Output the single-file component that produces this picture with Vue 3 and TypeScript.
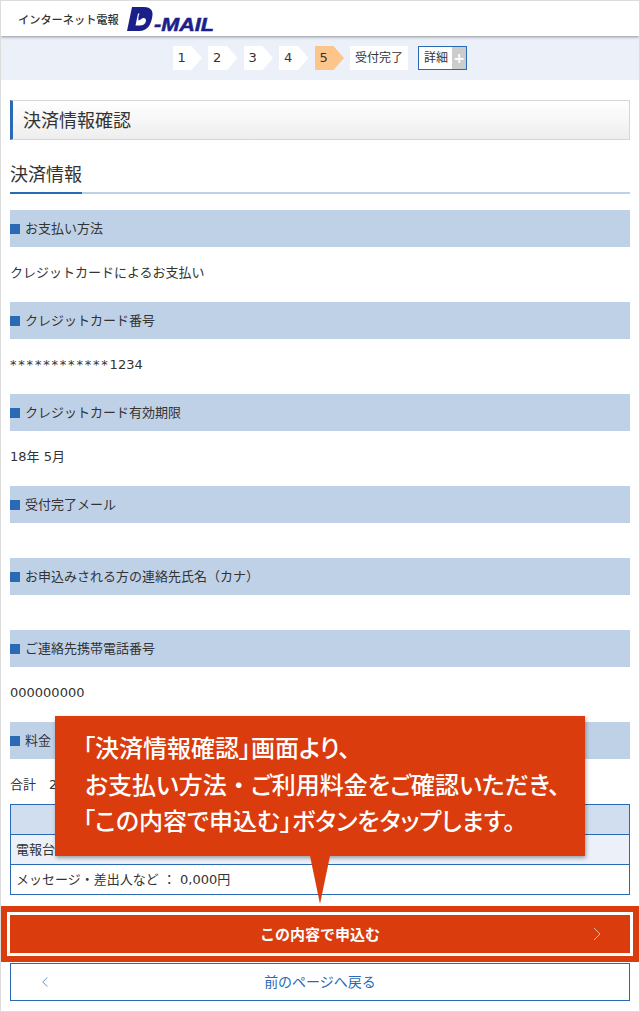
<script setup lang="ts">
interface Field {
  label: string
  value: string
  mask?: string
}

const steps = ['1', '2', '3', '4', '5']

const fields: Field[] = [
  { label: 'お支払い方法', value: 'クレジットカードによるお支払い' },
  { label: 'クレジットカード番号', mask: '************', value: '1234' },
  { label: 'クレジットカード有効期限', value: '18年 5月' },
  { label: '受付完了メール', value: '' },
  { label: 'お申込みされる方の連絡先氏名（カナ）', value: '' },
  { label: 'ご連絡先携帯電話番号', value: '000000000' },
  { label: '料金', value: '合計　2,000円' },
]
</script>

<template>
  <div class="page">
    <header class="header">
      <span class="service">インターネット電報</span>
      <svg class="logo" viewBox="0 0 92 26" width="92" height="26" aria-label="D-MAIL">
        <path fill="#1b1f8a" fill-rule="evenodd" d="M5 0H17C23 0 26 3 25.500 8C24.500 17 21 24 12 24H0ZM11 6.500L8.500 18.500H12.500C16 18.500 18.500 17 19 14C19.300 11.500 17.500 10.500 16 11C14.500 11.500 13.500 13 11.500 13.500C11 11 11.800 8.500 12.500 6.500Z" />
        <text x="27" y="24" class="logo-text" textLength="60" lengthAdjust="spacingAndGlyphs">-MAIL</text>
      </svg>
    </header>

    <nav class="steps">
      <span
        v-for="step in steps"
        :key="step"
        class="step"
        :class="{ current: step === '5' }"
      >{{ step }}</span>
      <span class="done">受付完了</span>
      <span class="detail">
        <span class="detail-label">詳細</span>
        <span class="detail-plus">+</span>
      </span>
    </nav>

    <main class="content">
      <h1 class="title">決済情報確認</h1>
      <h2 class="subtitle"><span>決済情報</span></h2>

      <section v-for="field in fields" :key="field.label" class="field">
        <h3 class="field-label">{{ field.label }}</h3>
        <p class="field-value"><span v-if="field.mask" class="mask">{{ field.mask }}</span>{{ field.value }}</p>
      </section>

      <div class="fee">
        <div class="fee-head"></div>
        <div class="fee-row shaded">電報台紙</div>
        <div class="fee-row">メッセージ・差出人など ： 0,000円</div>
      </div>
    </main>

    <div class="submit-wrap">
      <button class="submit" type="button">
        <span>この内容で申込む</span>
        <svg class="chevron right" viewBox="0 0 8 14" width="8" height="14"><path d="M1 1L7 7L1 13" /></svg>
      </button>
    </div>
    <button class="back" type="button">
      <svg class="chevron left" viewBox="0 0 8 14" width="6" height="11"><path d="M7 1L1 7L7 13" /></svg>
      <span>前のページへ戻る</span>
    </button>

    <div class="callout">
      <p>「決済情報確認」画面より、</p>
      <p class="indent">お支払い方法<span class="dot">・</span>ご利用料金をご確認いただき、</p>
      <p>「この内容で申込む」ボタンをタップします。</p>
      <svg class="callout-tail" viewBox="0 0 20 48" width="20" height="48"><path d="M0 0H20L10 48Z" /></svg>
    </div>
  </div>
</template>

<style scoped>
.page {
  position: relative;
  box-sizing: border-box;
  width: 640px;
  height: 1012px;
  overflow: hidden;
  background: #fff;
  border: 1px solid #dcdcdc;
  font-family: "DejaVu Sans", "Noto Sans CJK JP", sans-serif;
  color: #333;
}

.header {
  display: flex;
  align-items: center;
  height: 35px;
  padding-left: 17px;
  gap: 8px;
  box-shadow: 0 1px 3px rgba(0, 0, 0, 0.4);
  position: relative;
}

.service {
  font-family: "Noto Sans CJK JP", sans-serif;
  font-size: 11.2px;
  font-weight: 500;
  color: #333;
  width: 101px;
  white-space: nowrap;
}

.logo {
  margin-top: 2px;
}

.logo-text {
  font-family: "Liberation Sans", sans-serif;
  font-size: 18px;
  font-weight: 700;
  font-style: italic;
  fill: #1b1f8a;
  stroke: #1b1f8a;
  stroke-width: 0.5px;
}

.steps {
  display: flex;
  justify-content: flex-start;
  align-items: center;
  gap: 6px;
  height: 44px;
  padding-left: 171.5px;
  background: #ecf1f9;
  font-size: 13px;
}

.step {
  box-sizing: border-box;
  width: 29.500px;
  height: 24px;
  line-height: 24px;
  padding-left: 5px;
  background: #fff;
  clip-path: polygon(0 0, 19px 0, 100% 50%, 19px 100%, 0 100%);
}

.step.current {
  background: #fdc48c;
}

.done {
  padding: 0 5px;
  height: 24px;
  line-height: 24px;
  background: #fff;
  font-size: 12px;
}

.detail {
  display: flex;
  box-sizing: border-box;
  height: 24px;
  margin-left: 4px;
  border: 1px solid #2a6ab5;
  background: #fff;
  font-size: 12px;
  line-height: 22px;
}

.detail-label {
  padding: 0 4px 0 5px;
}

.detail-plus {
  width: 14px;
  background: #ccc;
  color: #fff;
  font-size: 14px;
  font-weight: 700;
  text-align: center;
}

.content {
  padding: 20px 9px 0;
}

.title {
  box-sizing: border-box;
  height: 40px;
  margin: 0;
  padding-left: 10px;
  border: 1px solid #d6d6d6;
  border-left: 3px solid #2a6ab5;
  background: linear-gradient(#fff, #eee);
  font-size: 18px;
  font-weight: 400;
  line-height: 39px;
}

.subtitle {
  margin: 21px 0 16px;
  border-bottom: 2px solid #bfd1e7;
  font-size: 18px;
  font-weight: 400;
  line-height: 28px;
  height: 33px;
  box-sizing: border-box;
}

.subtitle span {
  display: inline-block;
  height: 33px;
  border-bottom: 2px solid #2a6ab5;
  box-sizing: border-box;
}

.field-label {
  display: flex;
  align-items: center;
  box-sizing: border-box;
  height: 37px;
  margin: 0;
  padding-bottom: 2px;
  background: #bfd1e7;
  font-size: 13px;
  font-weight: 400;
}

.field-label::before {
  content: "";
  width: 10px;
  height: 10px;
  margin: 2px 5px 0 0;
  background: #2a6ab5;
}

.field-value {
  box-sizing: border-box;
  height: 55px;
  margin: 0;
  padding-top: 16px;
  font-size: 13px;
  line-height: 20px;
}

.mask {
  letter-spacing: 1.8px;
}

.field:nth-child(6) .field-value,
.field:nth-child(7) .field-value {
  height: 35px;
}

.fee {
  margin-top: -10px;
  border: 1px solid #2a6ab5;
  font-size: 13px;
}

.fee-head {
  height: 29px;
  background: #d1deef;
}

.fee-row {
  height: 29px;
  padding-left: 5px;
  line-height: 29px;
  border-top: 1px solid #2a6ab5;
}

.fee-row.shaded {
  background: #ecf1f9;
}

.submit-wrap {
  position: absolute;
  left: 0;
  right: 0;
  top: 905px;
  height: 56px;
  padding: 6px 6px;
  box-sizing: border-box;
  background: #da3c0e;
}

.submit {
  position: relative;
  display: block;
  width: 100%;
  height: 44px;
  padding-bottom: 3px;
  border: 3px solid #fff;
  background: #da3c0e;
  color: #fff;
  font-family: inherit;
  font-size: 15px;
  font-weight: 700;
}

.back {
  position: absolute;
  left: 9px;
  right: 9px;
  top: 962px;
  height: 38px;
  padding-bottom: 3px;
  border: 1px solid #2a6ab5;
  background: #fff;
  color: #2a6ab5;
  font-family: inherit;
  font-size: 14px;
}

.chevron {
  position: absolute;
  top: 50%;
  transform: translateY(-50%);
  fill: none;
}

.chevron.right {
  right: 29px;
  stroke: #f2b7a3;
}

.chevron.left {
  left: 31px;
  stroke: #2a6ab5;
}

.callout {
  position: absolute;
  left: 54px;
  top: 715px;
  width: 530px;
  height: 140px;
  box-sizing: border-box;
  padding: 13px 0 0 28px;
  background: #da3c0e;
  box-shadow: 1px 2px 4px rgba(0, 0, 0, 0.35);
  color: #fff;
  font-family: "Noto Sans CJK JP", sans-serif;
  font-size: 24px;
  font-weight: 500;
  font-feature-settings: "palt";
  line-height: 36.500px;
}

.callout p {
  margin: 0;
  white-space: nowrap;
}

.callout .indent {
  padding-left: 2px;
}

.callout .dot {
  font-feature-settings: normal;
}

.callout-tail {
  position: absolute;
  left: 255px;
  top: 140px;
  fill: #da3c0e;
}
</style>
